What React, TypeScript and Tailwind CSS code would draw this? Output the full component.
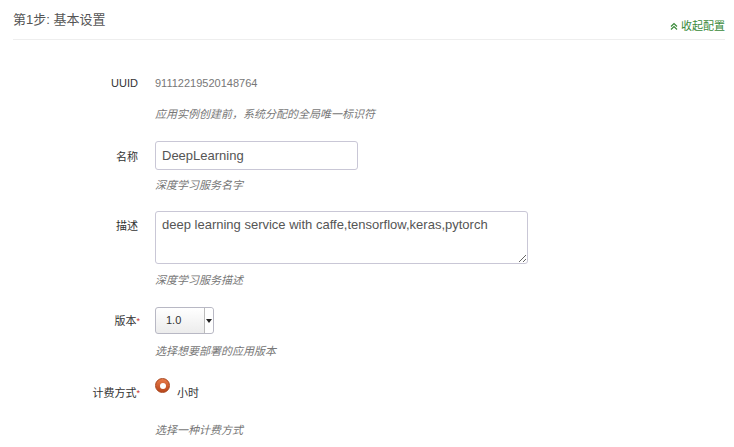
import React from "react";

const cjk = "font-['Liberation_Sans','Noto_Sans_CJK_SC',sans-serif]";

function Help({ children, className = "" }: { children: React.ReactNode; className?: string }) {
  return <div className={`text-[11px] leading-[20px] italic text-[#777] ${className}`}>{children}</div>;
}

function Label({ text, required = false, className = "" }: { text: string; required?: boolean; className?: string }) {
  return (
    <div className={`w-[140px] shrink-0 text-right text-[11px] leading-[20px] text-[#333] ${required ? "" : "pr-[2px]"} ${className}`}>
      {text}
      {required && <span className="text-[#c9302c] text-[9px] align-top">*</span>}
    </div>
  );
}

export default function App() {
  return (
    <div className={`w-[734px] h-[447px] bg-white ${cjk}`}>
      <div className="ml-[13px] mr-[9px] h-[40px] border-b border-[#eee] flex justify-between">
        <div className="pt-[10px] text-[13px] leading-[20px] text-[#555]">第1步: 基本设置</div>
        <div className="pt-[16px] flex items-start gap-[3px] text-[11px] leading-[20px] text-[#3a8a3a]">
          <svg width="8" height="20" viewBox="0 0 8 20" className="shrink-0">
            <path d="M1 10.5 L4 7.5 L7 10.5 M1 13.5 L4 10.5 L7 13.5" fill="none" stroke="#3a8a3a" strokeWidth="1.2" />
          </svg>
          <span>收起配置</span>
        </div>
      </div>

      <div className="pt-[33px]">
        <div className="flex gap-[15px]">
          <Label text="UUID" />
          <div>
            <div className="text-[11px] leading-[20px] text-[#777]">91112219520148764</div>
            <Help className="mt-[11px]">应用实例创建前，系统分配的全局唯一标识符</Help>
          </div>
        </div>

        <div className="flex gap-[15px] mt-[17px]">
          <Label text="名称" className="pt-[6px]" />
          <div>
            <input
              readOnly
              value="DeepLearning"
              className="w-[203px] h-[29px] rounded-[3px] border border-[#c9c7d6] px-[6px] text-[13px] text-[#555] font-['Liberation_Sans',sans-serif] outline-none"
            />
            <Help className="mt-[5px]">深度学习服务名字</Help>
          </div>
        </div>

        <div className="flex gap-[15px] mt-[16px]">
          <Label text="描述" className="pt-[5px]" />
          <div>
            <textarea
              readOnly
              defaultValue="deep learning service with caffe,tensorflow,keras,pytorch"
              className="block w-[373px] h-[53px] rounded-[3px] border border-[#c9c7d6] px-[6px] py-[4px] text-[13px] leading-[18px] text-[#555] font-['Liberation_Sans',sans-serif] outline-none"
            />
            <Help className="mt-[6px]">深度学习服务描述</Help>
          </div>
        </div>

        <div className="flex gap-[15px] mt-[17px]">
          <Label text="版本" required className="pt-[4px]" />
          <div>
            <div className="w-[59px] h-[27px] rounded-[3px] border border-[#b8b8c4] bg-gradient-to-b from-white to-[#ececec] flex items-stretch">
              <div className="flex-1 pl-[10px] text-[11px] leading-[25px] text-[#333]">1.0</div>
              <div className="w-[9px] border-l border-[#bbb] bg-white flex items-center justify-center rounded-r-[3px]">
                <svg width="6" height="4" viewBox="0 0 6 4">
                  <path d="M0 0 L6 0 L3 4 Z" fill="#222" />
                </svg>
              </div>
            </div>
            <Help className="mt-[7px]">选择想要部署的应用版本</Help>
          </div>
        </div>

        <div className="flex gap-[15px] mt-[17px]">
          <Label text="计费方式" required className="pt-[5px]" />
          <div>
            <div className="flex items-start gap-[7px]">
              <span className="w-[15px] h-[15px] rounded-full bg-gradient-to-b from-[#e87a48] to-[#b8461a] border border-[#a8451d] flex items-center justify-center">
                <span className="w-[6px] h-[6px] rounded-full bg-white" />
              </span>
              <span className="text-[11px] leading-[20px] text-[#333] mt-[5px]">小时</span>
            </div>
            <Help className="mt-[17px]">选择一种计费方式</Help>
          </div>
        </div>
      </div>
    </div>
  );
}
